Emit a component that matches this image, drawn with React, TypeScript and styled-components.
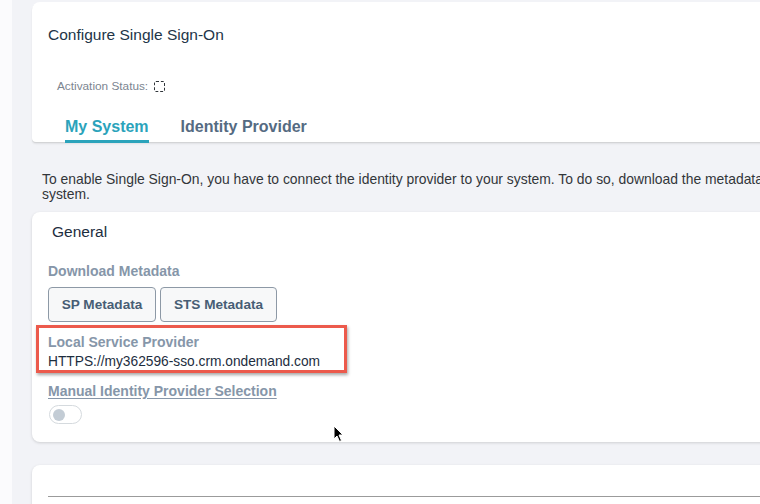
import React from "react";
import styled, { createGlobalStyle } from "styled-components";

const Global = createGlobalStyle`
  html, body { margin: 0; padding: 0; background: #f2f3f7; overflow: hidden; }
  body { font-family: "Liberation Sans", Arial, sans-serif; }
`;

const Shell = styled.div`
  display: flex;
  width: 900px;
  height: 504px;
  overflow: hidden;
`;

const Edge = styled.div`
  width: 12px;
  flex: none;
  background: #fbfbfd;
`;

const Main = styled.div`
  flex: 1;
  background: #f2f3f7;
  padding: 2px 0 0 20px;
  display: flex;
  flex-direction: column;
  position: relative;
  & > * { flex: none; }
`;

const HeaderCard = styled.section`
  background: #fff;
  height: 140px;
  border-radius: 8px 0 0 4px;
  box-shadow: 0 1px 0 #d3d4d6, 0 2px 2px rgba(0, 0, 0, 0.08);
  display: flex;
  flex-direction: column;
  padding-left: 16px;
  box-sizing: border-box;
`;

const Title = styled.h1`
  margin: 24px 0 0;
  font-size: 15.5px;
  font-weight: 400;
  color: #223548;
  line-height: 18px;
`;

const StatusRow = styled.div`
  display: flex;
  align-items: center;
  gap: 6px;
  margin: 35px 0 0 9px;
  font-size: 11.8px;
  color: #7c8590;
  height: 14px;
`;

const DashedBox = styled.span`
  width: 9px;
  height: 9px;
  border: 1.5px dashed #30353a;
  border-radius: 2px;
  display: inline-block;
`;

const Tabs = styled.div`
  display: flex;
  gap: 32px;
  margin: auto 0 -1px 17px;
`;

const Tab = styled.div<{ $active?: boolean }>`
  font-size: 16px;
  font-weight: 700;
  color: ${(p) => (p.$active ? "#2ba3bb" : "#556b82")};
  padding-bottom: 4px;
  line-height: 18px;
  border-bottom: 3px solid ${(p) => (p.$active ? "#2ba3bb" : "transparent")};
`;

const Description = styled.p`
  margin: 30px 0 0 10px;
  font-size: 13.9px;
  line-height: 15px;
  color: #32363a;
  width: 760px;
`;

const Card = styled.section<{ $h: number; $gap: number }>`
  background: #fff;
  border-radius: 8px 0 0 8px;
  box-shadow: 0 1px 3px rgba(0, 0, 0, 0.15);
  height: ${(p) => p.$h}px;
  margin-top: ${(p) => p.$gap}px;
  box-sizing: border-box;
  padding-left: 16px;
  display: flex;
  flex-direction: column;
  align-items: flex-start;
`;

const CardTitle = styled.h2`
  margin: 11px 0 0 4px;
  font-size: 15.5px;
  font-weight: 400;
  color: #1d2d3e;
  line-height: 18px;
`;

const Label = styled.div<{ $underline?: boolean; $top?: number }>`
  font-size: 14px;
  font-weight: 700;
  color: #8696a9;
  line-height: 16px;
  margin-top: ${(p) => p.$top ?? 0}px;
  text-decoration: ${(p) => (p.$underline ? "underline" : "none")};
  text-underline-offset: 2px;
`;

const ButtonRow = styled.div`
  display: flex;
  gap: 4px;
  margin-top: 8px;
`;

const Button = styled.button<{ $w: number }>`
  width: ${(p) => p.$w}px;
  height: 35px;
  border: 1px solid #8d99a6;
  border-radius: 4px;
  background: #f7f8f9;
  font-family: inherit;
  font-size: 13.6px;
  font-weight: 700;
  color: #475e75;
  padding: 0;
`;

const Highlight = styled.div`
  margin: 3px 0 0 -12px;
  width: 311px;
  height: 48px;
  box-sizing: border-box;
  border: 3px solid #ec5a4c;
  padding: 6px 0 0 9px;
  box-shadow: 1px 2px 3px rgba(0, 0, 0, 0.35);
  display: flex;
  flex-direction: column;
  gap: 4px;
`;

const Value = styled.div`
  font-size: 13.75px;
  color: #1d2d3e;
  line-height: 16px;
`;

const Toggle = styled.div`
  width: 33px;
  height: 19px;
  border: 1px solid #d5dade;
  border-radius: 10px;
  margin: 6px 0 0 1px;
  display: flex;
  align-items: center;
  padding-left: 3px;
  box-sizing: border-box;
  &::before {
    content: "";
    width: 12px;
    height: 12px;
    border-radius: 50%;
    background: #c3ccd5;
  }
`;

const Rule = styled.div`
  margin-top: 31px;
  width: 100%;
  height: 1px;
  background: #9b9b9b;
`;

const Cursor = styled.svg`
  position: absolute;
  left: 321px;
  top: 425px;
`;

export default function App() {
  return (
    <>
      <Global />
      <Shell>
        <Edge />
        <Main>
          <HeaderCard>
            <Title>Configure Single Sign-On</Title>
            <StatusRow>
              Activation Status: <DashedBox />
            </StatusRow>
            <Tabs>
              <Tab $active>My System</Tab>
              <Tab>Identity Provider</Tab>
            </Tabs>
          </HeaderCard>
          <Description>
            To enable Single Sign-On, you have to connect the identity provider to your system. To do so, download the metadata
            <br />
            system.
          </Description>
          <Card $h={230} $gap={10}>
            <CardTitle>General</CardTitle>
            <Label $top={22}>Download Metadata</Label>
            <ButtonRow>
              <Button $w={108}>SP Metadata</Button>
              <Button $w={117}>STS Metadata</Button>
            </ButtonRow>
            <Highlight>
              <Label>Local Service Provider</Label>
              <Value>HTTPS://my362596-sso.crm.ondemand.com</Value>
            </Highlight>
            <Label $underline $top={10}>
              Manual Identity Provider Selection
            </Label>
            <Toggle />
          </Card>
          <Card $h={60} $gap={23}>
            <Rule />
          </Card>
          <Cursor width="12" height="18" viewBox="0 0 12 18">
            <path d="M1 1 L1 14 L4 11 L6.5 16.5 L8.5 15.5 L6 10 L10 10 Z" fill="#000" stroke="#fff" strokeWidth="1" />
          </Cursor>
        </Main>
      </Shell>
    </>
  );
}
